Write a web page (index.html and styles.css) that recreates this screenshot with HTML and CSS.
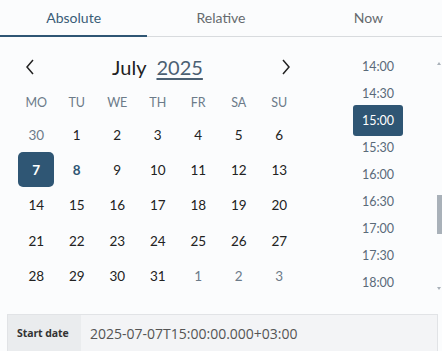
FILE: index.html
```html
<!DOCTYPE html>
<html>
<head>
<meta charset="utf-8">
<link rel="stylesheet" href="styles.css">
</head>
<body>
<div class="picker">
  <div class="tabs">
    <div class="tab active">Absolute</div>
    <div class="tab">Relative</div>
    <div class="tab">Now</div>
  </div>
  <div class="main">
    <div class="calendar">
      <div class="cal-head">
        <span class="nav"><svg width="10" height="16" viewBox="0 0 10 16"><path d="M8 1 L2 8 L8 15" fill="none" stroke="#222" stroke-width="1.5"/></svg></span>
        <span class="title"><span class="month">July</span><span class="year">2025</span></span>
        <span class="nav"><svg width="10" height="16" viewBox="0 0 10 16"><path d="M2 1 L8 8 L2 15" fill="none" stroke="#222" stroke-width="1.5"/></svg></span>
      </div>
      <div class="grid">
        <div class="wd">MO</div><div class="wd">TU</div><div class="wd">WE</div><div class="wd">TH</div><div class="wd">FR</div><div class="wd">SA</div><div class="wd">SU</div>
        <div class="d out"><span>30</span></div><div class="d"><span>1</span></div><div class="d"><span>2</span></div><div class="d"><span>3</span></div><div class="d"><span>4</span></div><div class="d"><span>5</span></div><div class="d"><span>6</span></div>
        <div class="d sel"><span>7</span></div><div class="d today"><span>8</span></div><div class="d"><span>9</span></div><div class="d"><span>10</span></div><div class="d"><span>11</span></div><div class="d"><span>12</span></div><div class="d"><span>13</span></div>
        <div class="d"><span>14</span></div><div class="d"><span>15</span></div><div class="d"><span>16</span></div><div class="d"><span>17</span></div><div class="d"><span>18</span></div><div class="d"><span>19</span></div><div class="d"><span>20</span></div>
        <div class="d"><span>21</span></div><div class="d"><span>22</span></div><div class="d"><span>23</span></div><div class="d"><span>24</span></div><div class="d"><span>25</span></div><div class="d"><span>26</span></div><div class="d"><span>27</span></div>
        <div class="d"><span>28</span></div><div class="d"><span>29</span></div><div class="d"><span>30</span></div><div class="d"><span>31</span></div><div class="d out"><span>1</span></div><div class="d out"><span>2</span></div><div class="d out"><span>3</span></div>
      </div>
    </div>
    <div class="times">
      <div class="time-list">
        <div class="t"><span>14:00</span></div>
        <div class="t"><span>14:30</span></div>
        <div class="t sel"><span>15:00</span></div>
        <div class="t"><span>15:30</span></div>
        <div class="t"><span>16:00</span></div>
        <div class="t"><span>16:30</span></div>
        <div class="t"><span>17:00</span></div>
        <div class="t"><span>17:30</span></div>
        <div class="t"><span>18:00</span></div>
      </div>
      <div class="scrollbar">
        <span class="arrow up"></span>
        <span class="thumb"></span>
        <span class="arrow down"></span>
      </div>
    </div>
  </div>
  <div class="field">
    <div class="label">Start date</div>
    <div class="value">2025-07-07T15:00:00.000+03:00</div>
  </div>
</div>
</body>
</html>
```

FILE: styles.css
```css
html, body {
  margin: 0;
  padding: 0;
  background: #fbfcfd;
}
body {
  width: 442px;
  height: 351px;
  overflow: hidden;
  font-family: Lato, "Open Sans", sans-serif;
  color: #222;
}
.picker {
  display: flex;
  flex-direction: column;
}
.tabs {
  display: flex;
  height: 36px;
  border-bottom: 1px solid #d8dbde;
}
.tab {
  flex: 1;
  display: flex;
  align-items: center;
  justify-content: center;
  font-size: 14px;
  color: #666a6e;
  padding-bottom: 1px;
}
.tab.active {
  color: #3a5d77;
  border-bottom: 2px solid #2f5674;
  margin-bottom: -1px;
  padding-bottom: 0;
}
.main {
  display: flex;
  height: 276px;
}
.calendar {
  width: 320px;
  padding: 12px 0 0 16px;
  box-sizing: border-box;
}
.cal-head {
  display: flex;
  align-items: center;
  justify-content: space-between;
  width: 283px;
  height: 36px;
  padding: 0 8px;
  box-sizing: border-box;
}
.nav {
  display: flex;
  width: 10px;
  height: 16px;
  margin-left: 1px;
}
.title {
  font-size: 20px;
  color: #222;
  display: flex;
  gap: 10px;
}
.year {
  color: #4b6073;
  text-decoration: underline;
  text-underline-offset: 3px;
  text-decoration-thickness: 1.5px;
}
.grid {
  display: grid;
  grid-template-columns: repeat(7, 40.5px);
  grid-auto-rows: 35.3px;
  grid-template-rows: 30px;
  margin-top: 2px;
}
.wd {
  display: flex;
  align-items: center;
  justify-content: center;
  font-size: 12.5px;
  color: #6c7b89;
}
.d {
  display: flex;
  align-items: center;
  justify-content: center;
  font-size: 13.5px;
  color: #222;
}
.d span {
  width: 36px;
  height: 35px;
  display: flex;
  align-items: center;
  justify-content: center;
  border-radius: 5px;
}
.d.out { color: #6c7b89; }
.d.sel span {
  background: #2f5674;
  color: #fff;
  font-weight: 700;
}
.d.today { color: #2f5674; font-weight: 700; }
.times {
  flex: 1;
  position: relative;
  overflow: hidden;
}
.time-list {
  display: flex;
  flex-direction: column;
  padding-top: 16px;
  padding-right: 6px;
}
.t {
  height: 27px;
  display: flex;
  align-items: center;
  justify-content: center;
  font-size: 12.5px;
  color: #5a6a79;
}
.t span {
  padding: 7px 9px;
  line-height: 17px;
  border-radius: 3px;
}
.t.sel span {
  background: #2f5674;
  color: #fff;
}
.scrollbar {
  position: absolute;
  right: 0;
  top: 19px;
  width: 6px;
  height: 236px;
}
.thumb {
  position: absolute;
  left: 1px;
  top: 139px;
  width: 5px;
  height: 39px;
  background: #a9b1b9;
}
.arrow {
  position: absolute;
  left: 1px;
  width: 0;
  height: 0;
  border-left: 2.5px solid transparent;
  border-right: 2.5px solid transparent;
}
.arrow.up { top: 6px; border-bottom: 3px solid #a9b1b9; }
.arrow.down { bottom: 2px; border-top: 3px solid #a9b1b9; }
.field {
  display: flex;
  margin: 1px 4px 0 7px;
  height: 36px;
  border: 1px solid #e1e3e6;
  background: #f3f4f6;
}
.label {
  display: flex;
  align-items: center;
  width: 73px;
  box-sizing: border-box;
  padding: 0 0 0 9px;
  background: #eaecee;
  font-family: "Open Sans", sans-serif;
  font-weight: 700;
  font-size: 10.5px;
  color: #333;
  white-space: nowrap;
  letter-spacing: -0.1px;
}
.value {
  display: flex;
  align-items: center;
  padding-left: 9px;
  font-family: "Open Sans", sans-serif;
  font-size: 14px;
  color: #555;
  white-space: nowrap;
}
```
